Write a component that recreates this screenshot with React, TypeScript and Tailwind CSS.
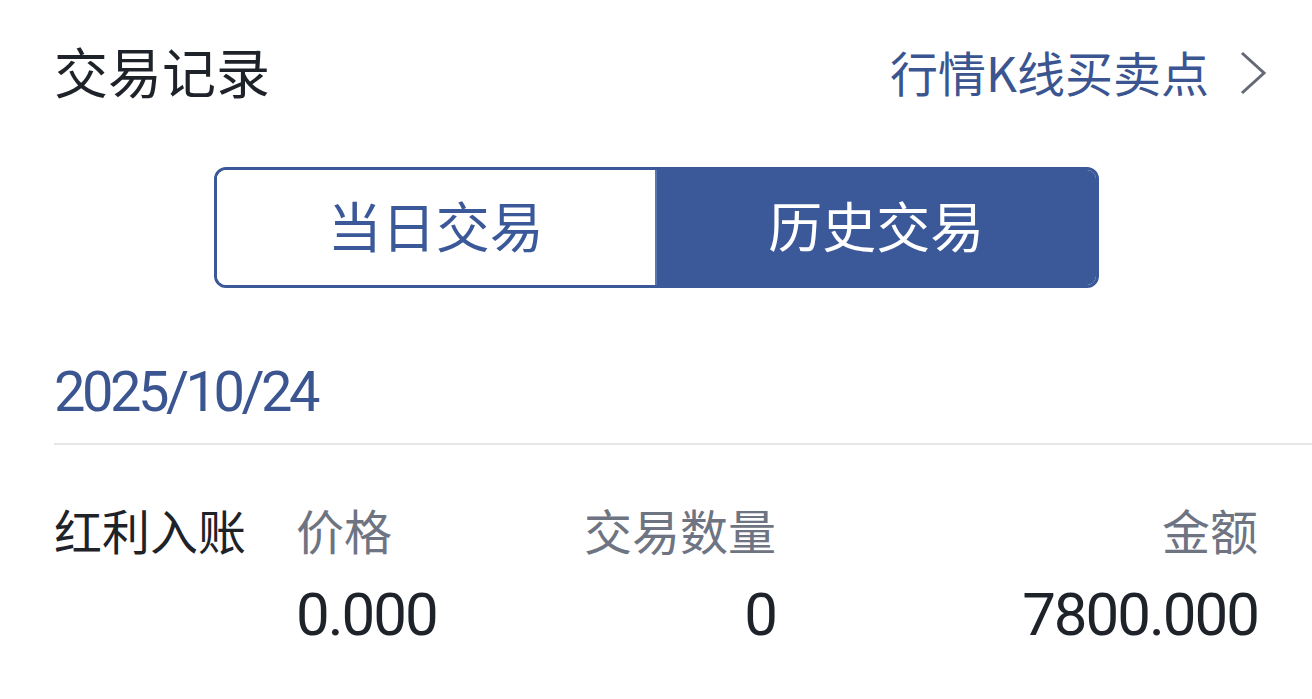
import React from "react";

const cjk = { fontFamily: '"Noto Sans CJK SC", "Noto Sans", sans-serif' };
const num = { fontFamily: 'Roboto, "Noto Sans", sans-serif' };

export default function App() {
  return (
    <div className="w-[1312px] h-[699px] bg-white overflow-hidden" style={cjk}>
      {/* Header */}
      <div className="h-[148px] flex items-center justify-between pl-[54px] pr-[44px] pb-[6px]">
        <div className="text-[54px] leading-none text-[#1e2229]">交易记录</div>
        <div className="flex items-center">
          <span className="text-[48px] leading-none text-[#3b5590]">行情K线买卖点</span>
          <svg width="28" height="46" viewBox="0 0 28 46" className="ml-[31px] mt-[4px]">
            <path d="M2 3 L24 23 L2 43" fill="none" stroke="#646975" strokeWidth="3" />
          </svg>
        </div>
      </div>

      {/* Toggle */}
      <div className="pt-[19px] flex justify-center">
        <div className="w-[885px] h-[121px] rounded-[12px] border-[3px] border-[#3b5898] flex overflow-hidden">
          <div className="flex-1 bg-white flex items-center justify-center pb-[6px] text-[54px] leading-none text-[#3b5898]">
            当日交易
          </div>
          <div className="flex-1 bg-[#3b5898] border-l-[2px] border-[#5a75b0] flex items-center justify-center pb-[6px] text-[54px] leading-none text-white">
            历史交易
          </div>
        </div>
      </div>

      {/* Date */}
      <div className="pl-[54px]">
        <div className="h-[155px] pt-[76px]">
          <div className="text-[56px] leading-[56px] tracking-[-3.5px] text-[#3b5590]" style={num}>
            2025/10/24
          </div>
        </div>
        <div className="h-[2px] bg-[#e6e6e8]" />
      </div>

      {/* Row */}
      <div className="pl-[54px] pr-[54px] pt-[60px]">
        <div className="grid grid-cols-[242px_240px_240px_1fr] items-center">
          <div className="text-[48px] leading-[48px] text-[#1e2229]">红利入账</div>
          <div className="text-[48px] leading-[48px] text-[#6e7482]">价格</div>
          <div className="text-[48px] leading-[48px] text-[#6e7482] text-right">交易数量</div>
          <div className="text-[48px] leading-[48px] text-[#6e7482] text-right">金额</div>

          <div className="mt-[32px]" />
          <div className="mt-[32px] text-[60px] leading-[60px] tracking-[-2px] text-[#1e2229]" style={num}>0.000</div>
          <div className="mt-[32px] text-[60px] leading-[60px] tracking-[-2px] text-[#1e2229] text-right" style={num}>0</div>
          <div className="mt-[32px] text-[60px] leading-[60px] tracking-[-2px] text-[#1e2229] text-right" style={num}>7800.000</div>
        </div>
      </div>
    </div>
  );
}
